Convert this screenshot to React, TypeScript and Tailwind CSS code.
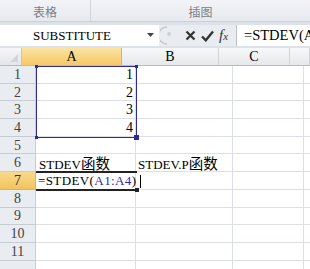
import React from "react";

const serif = { fontFamily: "'Liberation Serif', 'Noto Sans CJK SC', serif" };

const cols = [
  { key: "A", w: "w-[100px]" },
  { key: "B", w: "w-[97px]" },
  { key: "C", w: "w-[71px]" },
  { key: "", w: "w-[20px]" },
];

function Cjk({ children }: { children: React.ReactNode }) {
  return (
    <span className="text-[14.5px]" style={{ fontFamily: "'Noto Sans CJK SC', sans-serif" }}>
      {children}
    </span>
  );
}

function cellContent(row: number, col: string) {
  if (col === "A" && row >= 1 && row <= 4) {
    return <div className="w-full text-right pr-[2px] text-[14px]">{row}</div>;
  }
  if (row === 6 && col === "A") {
    return (
      <div className="pl-[3px] whitespace-nowrap">
        STDEV<Cjk>函数</Cjk>
      </div>
    );
  }
  if (row === 6 && col === "B") {
    return (
      <div className="pl-[2px] whitespace-nowrap">
        STDEV.P<Cjk>函数</Cjk>
      </div>
    );
  }
  if (row === 7 && col === "A") {
    return (
      <div className="pl-[2px] whitespace-nowrap tracking-[0.4px]">
        =STDEV(<span className="text-[#2c2ca0]">A1:A4</span>)
      </div>
    );
  }
  return null;
}

export default function App() {
  const rows = Array.from({ length: 12 }, (_, i) => i + 1);

  return (
    <div className="w-[310px] h-[269px] overflow-hidden bg-white text-black" style={serif}>
      {/* ribbon group labels */}
      <div className="h-[22px] flex bg-gradient-to-b from-[#f2f4f7] to-[#e6e9ee] border-b border-[#c9d0d8]">
        <div className="w-[100px] flex items-center justify-center pt-[3px] border-r border-[#cfd5dc] text-[12px] text-[#7b7f85]" style={{ fontFamily: "'Noto Sans CJK SC', sans-serif" }}>
          表格
        </div>
        <div className="w-[240px] flex items-center justify-center pt-[3px] text-[12px] text-[#7b7f85]" style={{ fontFamily: "'Noto Sans CJK SC', sans-serif" }}>
          插图
        </div>
      </div>
      <div className="h-[3px] bg-[#dde2e8]" />

      {/* formula bar */}
      <div className="h-[21px] flex bg-[#e9ecf0]">
        <div className="w-[159px] bg-white flex items-center relative">
          <span className="pl-[33px] text-[13px] leading-none">SUBSTITUTE</span>
          <svg className="absolute left-[147px] top-[8px]" width="7" height="4" viewBox="0 0 7 4">
            <path d="M0 0h7L3.5 4z" fill="#444" />
          </svg>
        </div>
        <div className="w-[77px] flex items-center">
          <svg width="14" height="19" viewBox="0 0 14 19" className="ml-[1px]">
            <path d="M7 1 A8 8 0 0 0 7 18" stroke="#c2c8cf" strokeWidth="1.4" fill="none" />
            <circle cx="9" cy="8" r="2" fill="#ced3d9" />
          </svg>
          <svg width="11" height="11" viewBox="0 0 11 11" className="ml-[11px]">
            <path d="M1.5 1.5l8 8M9.5 1.5l-8 8" stroke="#333" strokeWidth="2.2" />
          </svg>
          <svg width="13" height="12" viewBox="0 0 13 12" className="ml-[5px]">
            <path d="M1 6.5l3.8 3.8L12 1.5" stroke="#333" strokeWidth="2.4" fill="none" />
          </svg>
          <span className="ml-[5px] text-[15px] italic text-[#333]" style={{ fontFamily: "'Liberation Serif', serif" }}>
            f<span className="text-[11px]">x</span>
          </span>
        </div>
        <div className="flex-1 bg-white border-l border-[#b8c1cc] flex items-center pl-[7px] text-[14.5px] whitespace-nowrap overflow-hidden">
          =STDEV(A
        </div>
      </div>
      <div className="h-[2px] bg-[#dde2e8]" />

      {/* grid */}
      <div className="relative">
        <div className="flex h-[18px] border-b border-[#b6bcc6]">
          <div className="w-[36px] bg-gradient-to-b from-[#f5f6f7] to-[#e3e6ea] border-r border-[#c2c7ce] relative">
            <svg className="absolute right-[3px] bottom-[3px]" width="8" height="8" viewBox="0 0 8 8">
              <path d="M8 0V8H0z" fill="#d2d6dc" />
            </svg>
          </div>
          {cols.map((c) => (
            <div
              key={c.w}
              className={`${c.w} shrink-0 flex items-center justify-center text-[14px] border-r ${
                c.key === "A"
                  ? "bg-gradient-to-b from-[#fbe3a3] to-[#f5c965] border-[#d7b464]"
                  : "bg-gradient-to-b from-[#f7f8f9] to-[#e6e8eb] border-[#d0d4d9]"
              }`}
            >
              {c.key}
            </div>
          ))}
        </div>

        {rows.map((r) => (
          <div key={r} className="flex h-[17.7px]">
            <div
              className={`w-[36px] shrink-0 flex items-center justify-center text-[14px] border-r border-b ${
                r === 7
                  ? "bg-gradient-to-b from-[#f9d98d] to-[#f3c35d] border-[#d8b462] text-[#333]"
                  : "bg-[#e9ecf0] border-[#c7ccd3] text-[#444]"
              }`}
            >
              {r < 12 ? r : ""}
            </div>
            {cols.map((c) => (
              <div
                key={c.w}
                className={`${c.w} shrink-0 flex items-center text-[13px] border-r border-b border-[#dcdfe3] overflow-visible`}
              >
                {cellContent(r, c.key)}
              </div>
            ))}
          </div>
        ))}

        {/* referenced range A1:A4 */}
        <div className="absolute left-[36px] top-[18px] w-[101px] h-[72px] border border-[#2b2b9c] pointer-events-none">
          <div className="absolute -left-[2px] -top-[2px] w-[3px] h-[3px] bg-[#2b2b9c]" />
          <div className="absolute -right-[2px] -top-[2px] w-[3px] h-[3px] bg-[#2b2b9c]" />
          <div className="absolute -left-[2px] -bottom-[2px] w-[3px] h-[3px] bg-[#2b2b9c]" />
          <div className="absolute -right-[3px] -bottom-[3px] w-[5px] h-[5px] bg-[#2b2b9c]" />
        </div>

        {/* active cell A7 */}
        <div className="absolute left-[36px] top-[123px] w-[101px] h-[20px] border-t-2 border-b-2 border-[#222] pointer-events-none">
          <div className="absolute -right-[2px] -bottom-[3px] w-[4px] h-[4px] bg-[#222]" />
        </div>
        <div className="absolute left-[140px] top-[127px] w-px h-[13px] bg-black" />
      </div>
    </div>
  );
}
